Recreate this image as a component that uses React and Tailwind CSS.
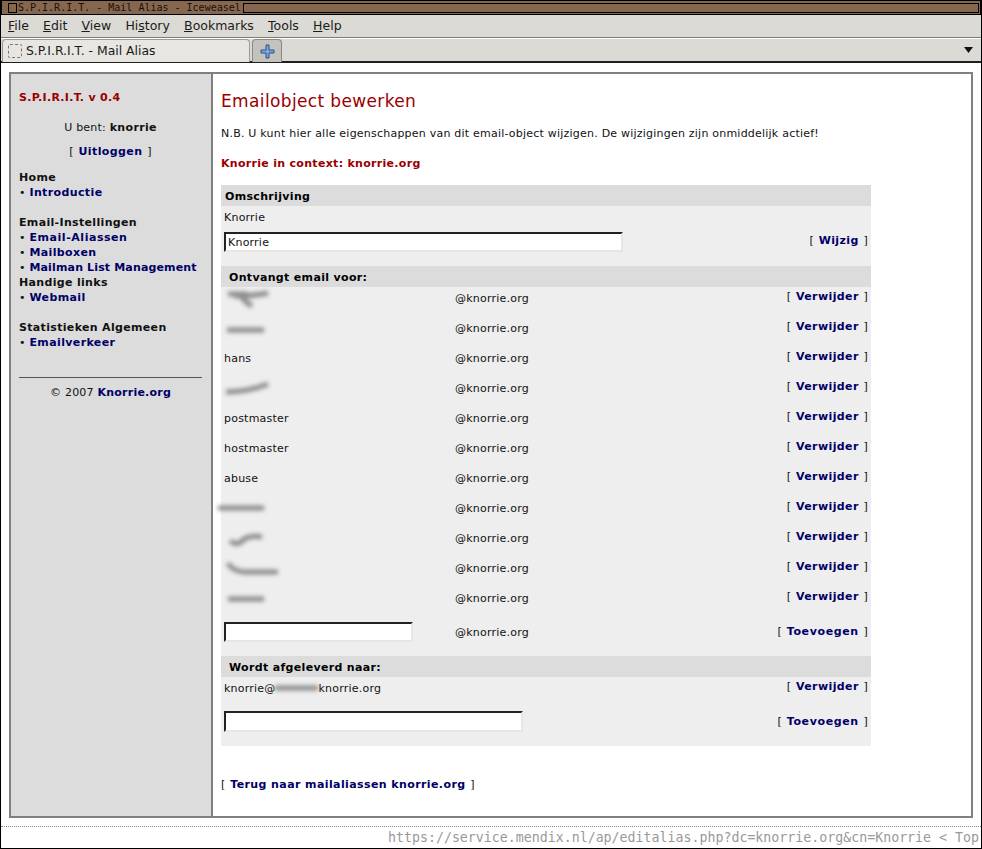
const MENU = [
  ["F", "ile"],
  ["E", "dit"],
  ["V", "iew"],
  ["Hi", "s", "tory"],
  ["B", "ookmarks"],
  ["T", "ools"],
  ["H", "elp"],
];

const ALIASES = [
  { smudge: "M4 5 H24 M10 7 Q30 7 44 4 M18 8 Q22 14 28 17", w: 44 },
  { smudge: "M3 11 H40", w: 44 },
  { name: "hans" },
  { smudge: "M2 13 Q24 13 44 5", w: 48 },
  { name: "postmaster" },
  { name: "hostmaster" },
  { name: "abuse" },
  { smudge: "M-6 9 H40", w: 48 },
  { smudge: "M6 12 Q14 18 20 10 Q28 6 38 8", w: 44 },
  { smudge: "M4 4 Q8 12 20 13 H54", w: 58 },
  { smudge: "M4 10 H40", w: 44 },
];

const Smudge = ({ d, w }) => (
  <svg width={w} height="20" viewBox={`0 0 ${w} 20`} className="overflow-visible blur-[2px] shrink-0">
    <path d={d} fill="none" stroke="#8c8c8c" strokeWidth="5" />
  </svg>
);

const Bold = ({ children, className = "tracking-[0.33px]" }) => (
  <b className={`font-bold ${className}`}>{children}</b>
);

const Action = ({ label, spacing = "tracking-[0.4px]" }) => (
  <span className="whitespace-pre">
    <span className="mr-[1px]">[</span>{" "}
    <Bold className={`text-[#000066] ${spacing}`}>{label}</Bold>{" "}
    <span className="ml-[1px]">]</span>
  </span>
);

const SectionHead = ({ children, className = "" }) => (
  <div className={`h-[21px] bg-[#dcdcdc] text-black leading-[23px] ${className}`}>
    <Bold>{children}</Bold>
  </div>
);

const TextInput = ({ value = "", className = "" }) => (
  <input
    readOnly
    value={value}
    className={`bg-white border-2 border-t-[#222] border-l-[#222] border-r-[#e8e6e1] border-b-[#e8e6e1] px-[2px] text-[11px] outline-none ${className}`}
  />
);

const SideLink = ({ children, spacing = "tracking-[0.38px]" }) => (
  <div>
    • <Bold className={`text-[#000066] ${spacing}`}>{children}</Bold>
  </div>
);

export default function App() {
  return (
    <div className="w-[982px] h-[849px] flex flex-col bg-white border border-black border-t-0 overflow-hidden font-['DejaVu_Sans',sans-serif] text-[11px] tracking-[0.22px] text-[#111]">
      {/* window title */}
      <div className="h-[15px] shrink-0 bg-[#85664f] border border-black flex items-center pl-[6px] pr-[1px] font-['DejaVu_Sans_Mono',monospace] text-[10px] tracking-normal text-[#1a1008]">
        <div className="w-[9px] h-[10px] border border-black shrink-0" />
        <span className="ml-[1px] mr-[2px] leading-none whitespace-pre">S.P.I.R.I.T. - Mail Alias - Iceweasel</span>
        <div className="flex-1 h-[10px] border border-black" />
      </div>

      {/* menu bar */}
      <div className="h-[23px] shrink-0 bg-[#dcdad5] border-b border-[#7f7b72] flex items-center pl-[7px] gap-[14.2px] text-[12.5px] tracking-normal text-[#1a1a1a]">
        {MENU.map((m) => (
          <span key={m.join("")}>
            {m.length === 3 ? (
              <>
                {m[0]}
                <span className="underline">{m[1]}</span>
                {m[2]}
              </>
            ) : (
              <>
                <span className="underline">{m[0]}</span>
                {m[1]}
              </>
            )}
          </span>
        ))}
      </div>

      {/* tab bar */}
      <div className="h-[25px] shrink-0 bg-[#dcdad5] border-b-2 border-[#1f1f1f] flex items-end pl-[1px] pr-[8px] border-t border-t-white tracking-normal">
        <div className="w-[248px] h-[23px] -mb-[1px] bg-[#e8e6e1] border border-b-0 border-[#9c9a94] rounded-t-[4px] flex items-center pl-[5px] gap-[4px] text-[12.4px] text-[#1a1a1a]">
          <div className="w-[14px] h-[14px] border border-dashed border-[#777] rounded-[2px]" />
          <span>S.P.I.R.I.T. - Mail Alias</span>
        </div>
        <div className="ml-[2px] w-[30px] h-[23px] -mb-[1px] bg-[#c4c2bc] border border-b-0 border-[#8a8880] rounded-t-[4px] flex items-center justify-center">
          <svg width="15" height="15" viewBox="0 0 15 15">
            <path d="M6 1h3v5h5v3H9v5H6V9H1V6h5z" fill="#7fa6d6" stroke="#24528f" strokeWidth="1" />
          </svg>
        </div>
        <div className="flex-1" />
        <svg width="9" height="6" viewBox="0 0 9 6" className="self-center">
          <path d="M0 0h9L4.5 6z" fill="#111" />
        </svg>
      </div>

      {/* page */}
      <div className="h-[764px] shrink-0 pt-[9px] pl-[8px] pr-[8px] border-b border-dotted border-[#888]">
        <div className="h-[746px] w-[964px] flex border-2 border-[#808080]">
          {/* sidebar */}
          <div className="w-[202px] shrink-0 bg-[#dcdcdc] border-r-2 border-[#808080] pt-[16px] pl-[8px] pr-[9px] leading-[15px]">
            <Bold className="text-[#990000] tracking-[0.3px]">S.P.I.R.I.T. v 0.4</Bold>
            <div className="mt-[15px] text-center">
              U bent: <Bold>knorrie</Bold>
            </div>
            <div className="mt-[9px] text-center">
              <Action label="Uitloggen" />
            </div>
            <div className="mt-[11px]"><Bold>Home</Bold></div>
            <SideLink>Introductie</SideLink>
            <div className="mt-[15px]"><Bold>Email-Instellingen</Bold></div>
            <SideLink spacing="tracking-[0.55px]">Email-Aliassen</SideLink>
            <SideLink>Mailboxen</SideLink>
            <SideLink spacing="tracking-[0.15px]">Mailman List Management</SideLink>
            <div><Bold>Handige links</Bold></div>
            <SideLink>Webmail</SideLink>
            <div className="mt-[15px]"><Bold>Statistieken Algemeen</Bold></div>
            <SideLink>Emailverkeer</SideLink>
            <div className="mt-[27px] border-t border-[#555]" />
            <div className="mt-[7px] text-center">
              © 2007 <Bold className="text-[#000066]">Knorrie.org</Bold>
            </div>
          </div>

          {/* main */}
          <div className="flex-1 pl-[8px] pt-[16px] leading-[15px]">
            <h1 className="text-[17px] leading-[22px] tracking-[0.36px] text-[#990000]">Emailobject bewerken</h1>
            <p className="mt-[14px]">
              N.B. U kunt hier alle eigenschappen van dit email-object wijzigen. De wijzigingen zijn onmiddelijk actief!
            </p>
            <p className="mt-[15px]">
              <Bold className="text-[#990000] tracking-[0.3px]">Knorrie in context: knorrie.org</Bold>
            </p>

            <div className="mt-[14px] w-[650px] h-[561px] bg-[#eeeeee]">
              <SectionHead className="pl-[4px]">Omschrijving</SectionHead>
              <div className="h-[26px] pl-[3px] pt-[4px]">Knorrie</div>
              <div className="flex items-start justify-between pl-[3px] pr-[3px] h-[34px]">
                <TextInput value="Knorrie" className="w-[399px] h-[20px]" />
                <span className="mt-[1px]">
                  <Action label="Wijzig" />
                </span>
              </div>

              <SectionHead className="pl-[8px]">Ontvangt email voor:</SectionHead>
              {ALIASES.map((a, i) => (
                <div key={i} className="h-[30px] pl-[3px] pr-[3px] pt-[4px] flex">
                  <div className="w-[231px] shrink-0 h-[15px] flex items-center">
                    {a.name ? a.name : <Smudge d={a.smudge} w={a.w} />}
                  </div>
                  <div className="flex-1">@knorrie.org</div>
                  <div className="-mt-[2px]">
                    <Action label="Verwijder" />
                  </div>
                </div>
              ))}
              <div className="h-[39px] pl-[3px] pr-[3px] flex items-start">
                <TextInput className="w-[189px] h-[20px] shrink-0 mt-[5px]" />
                <div className="ml-[42px] flex-1 mt-[8px]">@knorrie.org</div>
                <div className="mt-[7px]">
                  <Action label="Toevoegen" spacing="tracking-[0.62px]" />
                </div>
              </div>

              <SectionHead className="pl-[8px]">Wordt afgeleverd naar:</SectionHead>
              <div className="h-[34px] pl-[3px] pr-[3px] pt-[4px] flex justify-between">
                <span className="flex">
                  knorrie@
                  <span className="w-[43px] h-[15px] inline-flex items-center">
                    <Smudge d="M-1 9 H42" w={43} />
                  </span>
                  knorrie.org
                </span>
                <span className="-mt-[2px]">
                  <Action label="Verwijder" />
                </span>
              </div>
              <div className="flex items-start justify-between pl-[3px] pr-[3px]">
                <TextInput className="w-[299px] h-[21px]" />
                <span className="mt-[3px]">
                  <Action label="Toevoegen" spacing="tracking-[0.62px]" />
                </span>
              </div>
            </div>

            <p className="mt-[31px]">
              <Action label="Terug naar mailaliassen knorrie.org" />
            </p>
          </div>
        </div>
      </div>

      {/* status bar */}
      <div className="h-[22px] shrink-0 border-b border-black flex items-center justify-end pr-[2px] overflow-hidden font-['DejaVu_Sans_Mono',monospace] text-[13.28px] tracking-normal text-[#999] whitespace-pre">
        https://service.mendix.nl/ap/editalias.php?dc=knorrie.org&amp;cn=Knorrie &lt; Top
      </div>
    </div>
  );
}
